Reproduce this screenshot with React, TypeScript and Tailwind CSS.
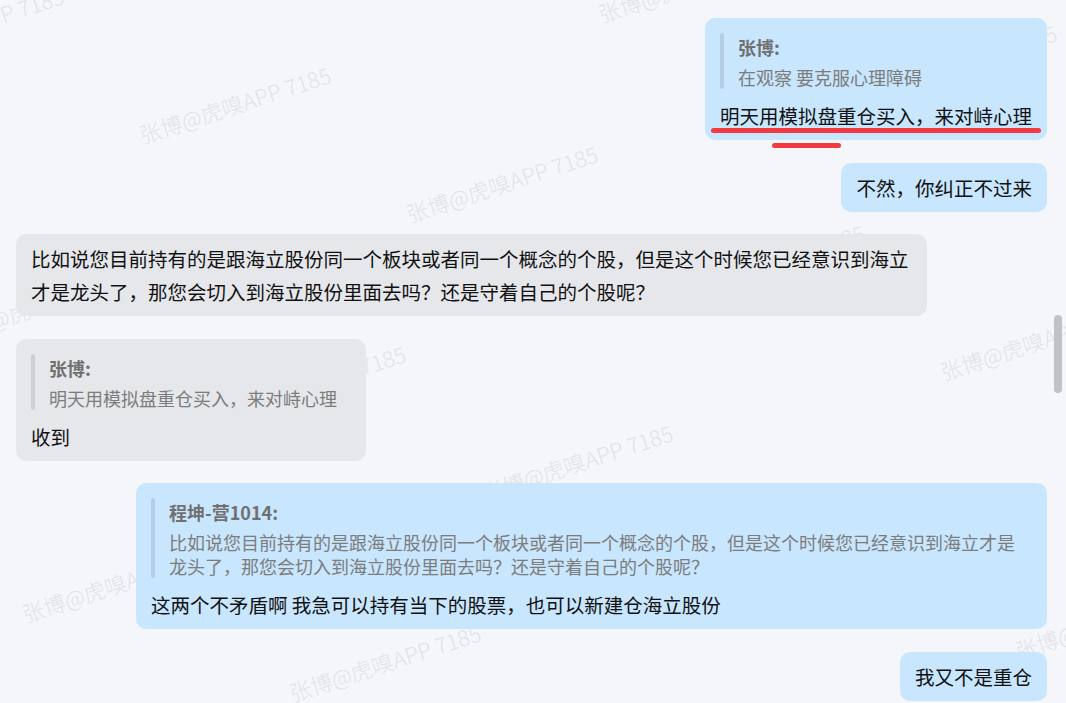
import React from "react";

type Quote = { author: string; text: string };
type Message = { side: "left" | "right"; text: string; quote?: Quote; mark?: boolean };

const messages: Message[] = [
  {
    side: "right",
    quote: { author: "张博:", text: "在观察 要克服心理障碍" },
    text: "明天用模拟盘重仓买入，来对峙心理",
    mark: true,
  },
  { side: "right", text: "不然，你纠正不过来" },
  {
    side: "left",
    text: "比如说您目前持有的是跟海立股份同一个板块或者同一个概念的个股，但是这个时候您已经意识到海立才是龙头了，那您会切入到海立股份里面去吗？还是守着自己的个股呢？",
  },
  {
    side: "left",
    quote: { author: "张博:", text: "明天用模拟盘重仓买入，来对峙心理" },
    text: "收到",
  },
  {
    side: "right",
    quote: {
      author: "程坤-营1014:",
      text: "比如说您目前持有的是跟海立股份同一个板块或者同一个概念的个股，但是这个时候您已经意识到海立才是龙头了，那您会切入到海立股份里面去吗？还是守着自己的个股呢？",
    },
    text: "这两个不矛盾啊 我急可以持有当下的股票，也可以新建仓海立股份",
  },
  { side: "right", text: "我又不是重仓" },
];

// watermark tiles: origin + i*(267,79) + j*(-192,200)
const watermarks: { x: number; y: number }[] = [];
for (let i = -4; i <= 6; i++) {
  for (let j = -2; j <= 4; j++) {
    const x = 143 + i * 267 + j * -192;
    const y = 145 + i * 79 + j * 200;
    if (x > -260 && x < 1066 && y > -20 && y < 780) watermarks.push({ x, y });
  }
}

function QuoteBlock({ quote }: { quote: Quote }) {
  return (
    <div className="mt-[7px] flex">
      <div className="w-[4px] shrink-0 rounded-full bg-black/10" />
      <div className="px-[14px] pt-[2px]">
        <div className="text-[18px] font-bold leading-6 text-[#707070]">{quote.author}</div>
        <div className="mt-[6px] text-[18px] leading-6 text-[#7c7c7c]">{quote.text}</div>
      </div>
    </div>
  );
}

function Bubble({ msg }: { msg: Message }) {
  const isRight = msg.side === "right";
  return (
    <div
      className={`relative max-w-[911px] rounded-[10px] px-[15px] py-2 ${
        isRight ? "self-end bg-[#c8e6fe]" : "self-start bg-[#e5e7eb]"
      }`}
    >
      {msg.quote && <QuoteBlock quote={msg.quote} />}
      <div className={`text-[19.5px] leading-[33px] text-[#111] ${msg.quote ? "mt-[10px]" : ""}`}>{msg.text}</div>
      {msg.mark && (
        <>
          <div className="absolute left-[6px] top-[110px] h-[5px] w-[330px] rounded-full bg-[#f23b40]" />
          <div className="absolute left-[67px] top-[125px] h-[5px] w-[69px] rounded-full bg-[#f23b40]" />
        </>
      )}
    </div>
  );
}

export default function App() {
  return (
    <div
      className="relative h-[703px] w-full overflow-hidden bg-[#f5f6fa]"
      style={{ fontFamily: '"Noto Sans CJK SC", "Noto Sans", sans-serif' }}
    >
      <div className="pointer-events-none absolute inset-0">
        {watermarks.map((w) => (
          <span
            key={`${w.x}-${w.y}`}
            className="absolute origin-bottom-left -rotate-[18deg] whitespace-nowrap text-[22px] font-light leading-none text-[#e1e3e9]"
            style={{ left: w.x, top: w.y - 22 }}
          >
            张博@虎嗅APP 7185
          </span>
        ))}
      </div>

      <div className="relative flex flex-col gap-[22.5px] pl-4 pr-[19px] pt-[18px]">
        {messages.map((m, i) => (
          <Bubble key={i} msg={m} />
        ))}
      </div>

      <div className="absolute right-[4px] top-[315px] h-[78px] w-[8px] rounded-full bg-[#c1c2c6]" />
    </div>
  );
}
